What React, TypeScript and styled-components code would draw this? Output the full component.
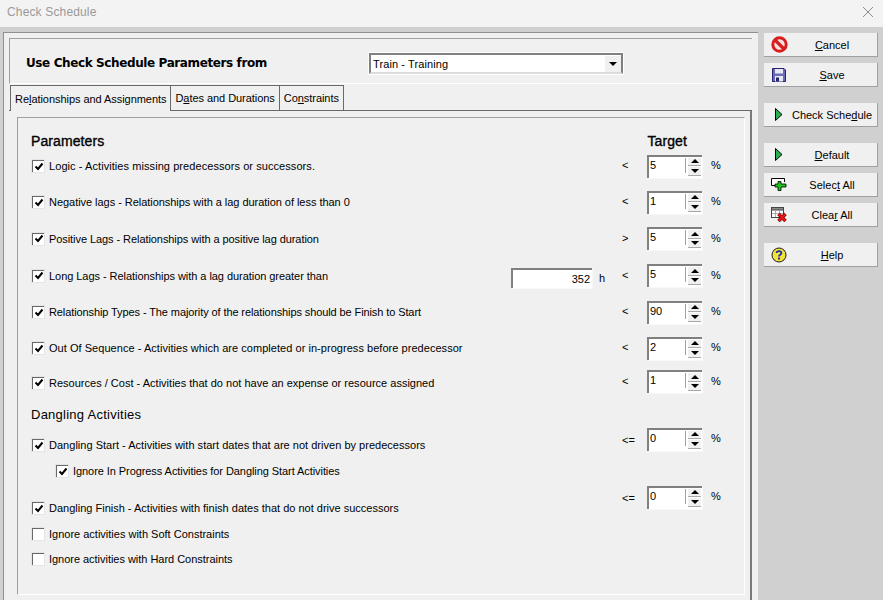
import React from 'react';
import styled, { createGlobalStyle } from 'styled-components';

const GlobalStyle = createGlobalStyle`
  html, body {
    margin: 0;
    padding: 0;
    background: #d0d0d0;
  }
  * {
    box-sizing: border-box;
  }
`;

const Win = styled.div`
  width: 883px;
  height: 600px;
  overflow: hidden;
  display: flex;
  flex-direction: column;
  background: #d0d0d0;
  color: #000;
  font-family: 'Liberation Sans', Arial, sans-serif;
  font-size: 11px;
`;

const TitleBar = styled.div`
  height: 27px;
  flex: none;
  background: #f3f3f3;
  display: flex;
  align-items: center;
  justify-content: space-between;
  padding: 0 9px 3px 7px;
  color: #9a9a9a;
  font-size: 12px;
  letter-spacing: 0.15px;
`;

const Body = styled.div`
  flex: 1;
  display: flex;
  padding: 5px 5px 0 3px;
  min-height: 0;
`;

const Outer = styled.div`
  width: 755px;
  flex: none;
  height: 600px;
  background: #f0f0f0;
  border-top: 1px solid #8f8f8f;
  border-left: 1px solid #8f8f8f;
  padding: 5px 6px 0 5px;
`;

const Header = styled.div`
  height: 46px;
  border-top: 1px solid #a0a0a0;
  border-left: 1px solid #a0a0a0;
  border-bottom: 1px solid #fff;
  display: flex;
  align-items: center;
  padding: 2px 0 0 16px;
`;

const HeaderTitle = styled.div`
  width: 343px;
  margin-top: 1px;
  font-family: 'DejaVu Sans', sans-serif;
  font-weight: 700;
  font-size: 12px;
  letter-spacing: -0.39px;
`;

const Combo = styled.div`
  width: 254px;
  height: 21px;
  margin-top: 3px;
  background: #fff;
  border: 2px solid #808080;
  border-bottom-color: #dcdcdc;
  outline: 1px solid #fff;
  display: flex;
  align-items: center;
  justify-content: space-between;
  padding-left: 2px;
  letter-spacing: 0.1px;
`;

const ComboBtn = styled.div`
  width: 16px;
  height: 16px;
  background: #f0f0f0;
  display: flex;
  align-items: center;
  justify-content: center;
`;

const TabStrip = styled.div`
  display: flex;
  align-items: flex-end;
  height: 26px;
  margin-top: 1px;
  padding-left: 1px;
  border-bottom: 1px solid #696969;
`;

const Tab = styled.div<{ $active?: boolean }>`
  height: ${(p) => (p.$active ? 26 : 25)}px;
  margin-bottom: ${(p) => (p.$active ? -1 : 0)}px;
  padding: 0 4px;
  display: flex;
  align-items: center;
  background: #f0f0f0;
  border-top: 1px solid #696969;
  border-right: 1px solid #696969;
  border-left: ${(p) => (p.$active ? '1px solid #696969' : 'none')};
  white-space: nowrap;
  letter-spacing: -0.05px;
`;

const Key = styled.u`
  text-underline-offset: 1px;
`;

const TabPage = styled.div`
  height: 500px;
  padding: 6px 5px 0 8px;
  border-right: 2px solid #7a7a7a;
`;

const Group = styled.div`
  height: 478px;
  border-top: 1px solid #a0a0a0;
  border-left: 1px solid #a0a0a0;
  border-right: 1px solid #fff;
  border-bottom: 1px solid #fff;
  padding: 15px 0 0 13px;
`;

const HeadRow = styled.div`
  height: 15px;
  display: flex;
  justify-content: space-between;
  padding-right: 57px;
  align-items: flex-start;
`;

const SectionTitle = styled.div`
  font-size: 14px;
  line-height: 16px;
  -webkit-text-stroke: 0.35px #000;
  letter-spacing: 0.1px;
`;

const DanglingTitle = styled.div`
  font-size: 13px;
  line-height: 16px;
  letter-spacing: 0.25px;
  height: 23px;
  margin-top: 8px;
`;

const Row = styled.div<{ $h: number; $indent?: number; $top?: number }>`
  height: ${(p) => p.$h}px;
  margin-top: ${(p) => p.$top ?? 0}px;
  display: flex;
  align-items: center;
  padding-left: ${(p) => 1 + (p.$indent ?? 0)}px;
`;

const Box = styled.span`
  width: 12px;
  height: 12px;
  flex: none;
  background: #fff;
  border-top: 1px solid #696969;
  border-left: 1px solid #696969;
  outline: 1px solid #e4e4e4;
  display: flex;
  align-items: center;
  justify-content: center;
`;

const Label = styled.span<{ $track?: number }>`
  margin-left: 5px;
  letter-spacing: ${(p) => p.$track ?? 0}px;
  white-space: nowrap;
  flex: 1;
`;

const Hours = styled.div`
  width: 81px;
  height: 20px;
  margin-top: 4px;
  background: #fff;
  border-top: 2px solid #808080;
  border-left: 2px solid #808080;
  box-shadow: 1px 1px 0 #f8f8f8;
  text-align: right;
  padding-right: 2px;
  line-height: 18px;
`;

const Unit = styled.span`
  width: 30px;
  padding-left: 7px;
  flex: none;
  margin-top: 4px;
`;

const OpSpacer = styled.span<{ $drop?: number }>`
  width: 25px;
  flex: none;
  margin-top: ${(p) => p.$drop ?? -2}px;
`;

const Target = styled.div<{ $lift?: number }>`
  display: flex;
  align-items: center;
  flex: none;
  width: 122px;
  margin-top: ${(p) => -(p.$lift ?? 0) * 2}px;
`;

const Spin = styled.div`
  width: 55px;
  height: 23px;
  flex: none;
  background: #fff;
  border-top: 2px solid #808080;
  border-left: 2px solid #808080;
  box-shadow: 1px 1px 0 #f8f8f8;
  display: flex;
  padding: 1px 1px 0 1px;
  line-height: 15px;
`;

const SpinValue = styled.span`
  flex: 1;
  border-right: 1px solid #a0a0a0;
  height: 15px;
  margin-right: 2px;
`;

const SpinBtns = styled.div`
  width: 13px;
  display: flex;
  flex-direction: column;
  gap: 1px;
`;

const SpinBtn = styled.div`
  height: 8.5px;
  background: #f0f0f0;
  border-bottom: 1px solid #a8a8a8;
  display: flex;
  align-items: center;
  justify-content: center;
`;

const Percent = styled.span`
  margin-left: 9px;
  margin-top: -2px;
`;

const Side = styled.div`
  flex: 1;
  padding: 1px 0 0 6px;
  display: flex;
  flex-direction: column;
`;

const SideBtn = styled.div<{ $gap: number }>`
  width: 114px;
  height: 24px;
  flex: none;
  margin-top: ${(p) => p.$gap}px;
  background: #f0f0f0;
  border-right: 1px solid #a0a0a0;
  border-bottom: 1px solid #a0a0a0;
  display: flex;
  align-items: center;
`;

const SideIcon = styled.span`
  width: 30px;
  height: 22px;
  margin-right: -7px;
  flex: none;
  display: flex;
  align-items: center;
  justify-content: center;
`;

const SideText = styled.span`
  flex: 1;
  text-align: center;
  white-space: nowrap;
`;

const Play = () => (
  <svg width="12" height="15" viewBox="0 0 12 15">
    <path d="M2.5 1.5 L2.5 13.5 L9 7.5 Z" fill="#22b14c" stroke="#000" strokeWidth="1" />
  </svg>
);

const Cancel = () => (
  <svg width="17" height="17" viewBox="0 0 17 17">
    <circle cx="8.5" cy="8.5" r="6.7" fill="#f6e4e4" stroke="#d81e1e" strokeWidth="3" />
    <path d="M4 4 L13 13" stroke="#d81e1e" strokeWidth="3.2" />
  </svg>
);

const Floppy = () => (
  <svg width="14" height="14" viewBox="0 0 14 14">
    <path d="M0.5 0.5 H12 L13.5 2 V13.5 H0.5 Z" fill="#6a6ab8" stroke="#23236e" />
    <rect x="3" y="1" width="8" height="4.5" fill="#e8e8f4" />
    <rect x="3" y="8" width="8" height="5.5" fill="#e8e8f4" />
    <rect x="4" y="9.5" width="3" height="4" fill="#23236e" />
  </svg>
);

const Plus = () => (
  <svg width="16" height="13" viewBox="0 0 16 13">
    <path d="M4 7.5 H0.5 V0.5 H13.5 V4" fill="#fff" stroke="#000" />
    <path d="M7 3.5 H10 V6 H15 V9 H10 V12.5 H7 V9 H4 V6 H7 Z" fill="#1fc21f" stroke="#000" strokeWidth="0.8" />
  </svg>
);

const ClearIcon = () => (
  <svg width="16" height="15" viewBox="0 0 16 15">
    <rect x="0.5" y="0.5" width="12" height="10" fill="#fff" stroke="#444" />
    <rect x="0.5" y="0.5" width="12" height="2.5" fill="#8a8a8a" stroke="#444" />
    <path d="M4.5 3 V10 M8.5 3 V10 M1 6.5 H12" stroke="#999" strokeWidth="0.8" />
    <path d="M7.5 7 L14.5 14 M14.5 7 L7.5 14" stroke="#500" strokeWidth="3.4" />
    <path d="M7.5 7 L14.5 14 M14.5 7 L7.5 14" stroke="#f01414" strokeWidth="2.2" />
  </svg>
);

const HelpIcon = () => (
  <svg width="16" height="16" viewBox="0 0 16 16">
    <circle cx="8" cy="8" r="7" fill="#f3e23c" stroke="#1a1a1a" />
    <path d="M5.6 6 C5.6 3.4 10.4 3.4 10.4 6 C10.4 7.8 8 7.6 8 9.4" fill="none" stroke="#1a2fb0" strokeWidth="1.8" />
    <rect x="7" y="10.5" width="2" height="2" fill="#1a2fb0" />
  </svg>
);

const Tri = ({ down }: { down?: boolean }) => (
  <svg width="8" height="4" viewBox="0 0 8 4">
    <path d={down ? 'M0 0 H8 L4 4 Z' : 'M0 4 H8 L4 0 Z'} fill="#000" />
  </svg>
);

const Check = () => (
  <svg width="10" height="10" viewBox="0 0 10 10">
    <path d="M1.5 4.5 L4 7 L8.5 1.5" fill="none" stroke="#000" strokeWidth="2" />
  </svg>
);

const Close = () => (
  <svg width="12" height="12" viewBox="0 0 12 12">
    <path d="M1 1 L11 11 M11 1 L1 11" stroke="#8c8c8c" strokeWidth="1" />
  </svg>
);

const TargetCell = ({ op, value, lift, drop }: { op: string; value: string; lift?: number; drop?: number }) => (
  <Target $lift={lift}>
    <OpSpacer $drop={drop}>{op}</OpSpacer>
    <Spin>
      <SpinValue>{value}</SpinValue>
      <SpinBtns>
        <SpinBtn><Tri /></SpinBtn>
        <SpinBtn><Tri down /></SpinBtn>
      </SpinBtns>
    </Spin>
    <Percent>%</Percent>
  </Target>
);

const params = [
  { h: 36, track: 0.07, text: 'Logic - Activities missing predecessors or successors.', op: '<', value: '5' },
  { h: 36, track: -0.04, text: 'Negative lags - Relationships with a lag duration of less than 0', op: '<', value: '1' },
  { h: 37, track: -0.07, text: 'Positive Lags - Relationships with a positive lag duration', op: '>', value: '5' },
  { h: 37, track: -0.05, text: 'Long Lags - Relationships with a lag duration greater than', op: '<', value: '5', hours: '352' },
  { h: 36, track: -0.1, text: 'Relationship Types - The majority of the relationships should be Finish to Start', op: '<', value: '90' },
  { h: 36, track: 0.04, text: 'Out Of Sequence - Activities which are completed or in-progress before predecessor', op: '<', value: '2' },
  { h: 33, track: 0.01, lift: 1, text: 'Resources / Cost - Activities that do not have an expense or resource assigned', op: '<', value: '1' },
];

export default function App() {
  return (
    <Win>
      <GlobalStyle />
      <TitleBar>
        <span>Check Schedule</span>
        <Close />
      </TitleBar>
      <Body>
        <Outer>
          <Header>
            <HeaderTitle>Use Check Schedule Parameters from</HeaderTitle>
            <Combo>
              <span>Train - Training</span>
              <ComboBtn><Tri down /></ComboBtn>
            </Combo>
          </Header>
          <TabStrip>
            <Tab $active>Re<Key>l</Key>ationships and Assignments</Tab>
            <Tab>D<Key>a</Key>tes and Durations</Tab>
            <Tab>Co<Key>n</Key>straints</Tab>
          </TabStrip>
          <TabPage>
            <Group>
              <HeadRow>
                <SectionTitle>Parameters</SectionTitle>
                <SectionTitle>Target</SectionTitle>
              </HeadRow>
              {params.map((p) => (
                <Row key={p.text} $h={p.h}>
                  <Box><Check /></Box>
                  <Label $track={p.track}>{p.text}</Label>
                  {p.hours && (
                    <>
                      <Hours>{p.hours}</Hours>
                      <Unit>h</Unit>
                    </>
                  )}
                  <TargetCell op={p.op} value={p.value} lift={p.lift} />
                </Row>
              ))}
              <DanglingTitle>Dangling Activities</DanglingTitle>
              <Row $h={30}>
                <Box><Check /></Box>
                <Label $track={0.02}>Dangling Start - Activities with start dates that are not driven by predecessors</Label>
                <TargetCell op="<=" value="0" lift={6} drop={2} />
              </Row>
              <Row $h={22} $indent={24}>
                <Box><Check /></Box>
                <Label $track={-0.07}>Ignore In Progress Activities for Dangling Start Activities</Label>
              </Row>
              <Row $h={26} $top={13}>
                <Box><Check /></Box>
                <Label>Dangling Finish - Activities with finish dates that do not drive successors</Label>
                <TargetCell op="<=" value="0" lift={11} drop={2} />
              </Row>
              <Row $h={26}>
                <Box />
                <Label>Ignore activities with Soft Constraints</Label>
              </Row>
              <Row $h={24}>
                <Box />
                <Label $track={-0.03}>Ignore activities with Hard Constraints</Label>
              </Row>
            </Group>
          </TabPage>
        </Outer>
        <Side>
          <SideBtn $gap={0}><SideIcon><Cancel /></SideIcon><SideText><Key>C</Key>ancel</SideText></SideBtn>
          <SideBtn $gap={6}><SideIcon><Floppy /></SideIcon><SideText><Key>S</Key>ave</SideText></SideBtn>
          <SideBtn $gap={16}><SideIcon><Play /></SideIcon><SideText>Check Sche<Key>d</Key>ule</SideText></SideBtn>
          <SideBtn $gap={16}><SideIcon><Play /></SideIcon><SideText><Key>D</Key>efault</SideText></SideBtn>
          <SideBtn $gap={6}><SideIcon><Plus /></SideIcon><SideText>Selec<Key>t</Key> All</SideText></SideBtn>
          <SideBtn $gap={6}><SideIcon><ClearIcon /></SideIcon><SideText>Clea<Key>r</Key> All</SideText></SideBtn>
          <SideBtn $gap={16}><SideIcon><HelpIcon /></SideIcon><SideText><Key>H</Key>elp</SideText></SideBtn>
        </Side>
      </Body>
    </Win>
  );
}
